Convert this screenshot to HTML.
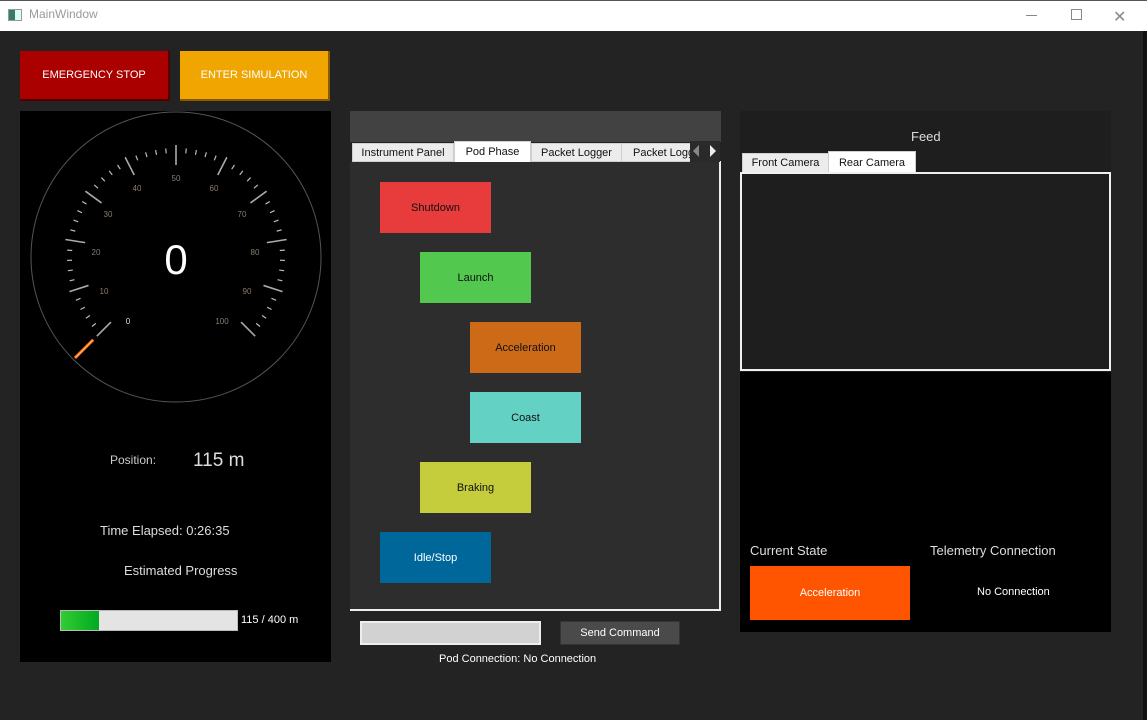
<!DOCTYPE html>
<html><head><meta charset="utf-8"><style>
*{margin:0;padding:0;box-sizing:border-box}
body{width:1147px;height:720px;background:#232323;font-family:"Segoe UI","Liberation Sans",sans-serif;position:relative;overflow:hidden}
.a{position:absolute}
.c{display:flex;align-items:center;justify-content:center}
.tab{position:absolute;background:#ececec;border:1px solid #cfcfcf;color:#111;font-size:11px;display:flex;align-items:center;justify-content:center;white-space:nowrap;overflow:hidden}
.ph{position:absolute;width:111px;height:51px;font-size:11px;color:#111;display:flex;align-items:center;justify-content:center}
</style></head><body>
<div class="a" style="left:0;top:0;width:1147px;height:31px;background:#fff"></div>
<div class="a" style="left:0;top:0;width:1147px;height:1px;background:#555"></div>
<div class="a" style="left:8px;top:9px;width:14px;height:12px;border:1px solid #999;background:linear-gradient(90deg,#3a7a6a 50%,#dfe 50%)"></div>
<div class="a" style="left:29px;top:7px;font-size:12px;color:#9a9a9a">MainWindow</div>
<div class="a" style="left:1026px;top:15px;width:11px;height:1px;background:#888"></div>
<div class="a" style="left:1071px;top:9px;width:11px;height:11px;border:1px solid #888"></div>
<div class="a" style="left:1113px;top:7px;font-size:16px;color:#888">✕</div>
<div class="a" style="left:1143px;top:31px;width:4px;height:689px;background:#111"></div>

<div class="a c" style="left:20px;top:51px;width:150px;height:50px;background:#ab0000;border-right:2px solid #500;border-bottom:2px solid #500;color:#fff;font-size:11px">EMERGENCY STOP</div>
<div class="a c" style="left:180px;top:51px;width:150px;height:50px;background:#f0a500;border-right:2px solid #8a5a00;border-bottom:2px solid #8a5a00;color:#fff;font-size:11px">ENTER SIMULATION</div>

<div class="a" style="left:20px;top:111px;width:311px;height:551px;background:#000"></div>
<svg class="a" style="left:0;top:0" width="340" height="420">
<defs>
<line id="mn" x1="0" y1="-104" x2="0" y2="-109" stroke="#bbb" stroke-width="1.2"/>
<line id="mj" x1="0" y1="-92" x2="0" y2="-112" stroke="#aaa" stroke-width="1.6"/>
</defs>
<circle cx="176" cy="257" r="145" fill="none" stroke="#555" stroke-width="1"/>
<g transform="translate(176,257)">
<use href="#mj" transform="rotate(-135)"/><use href="#mj" transform="rotate(-108)"/><use href="#mj" transform="rotate(-81)"/><use href="#mj" transform="rotate(-54)"/><use href="#mj" transform="rotate(-27)"/><use href="#mj" transform="rotate(0)"/><use href="#mj" transform="rotate(27)"/><use href="#mj" transform="rotate(54)"/><use href="#mj" transform="rotate(81)"/><use href="#mj" transform="rotate(108)"/><use href="#mj" transform="rotate(135)"/>
<use href="#mn" transform="rotate(-129.6)"/><use href="#mn" transform="rotate(-124.2)"/><use href="#mn" transform="rotate(-118.8)"/><use href="#mn" transform="rotate(-113.4)"/><use href="#mn" transform="rotate(-102.6)"/><use href="#mn" transform="rotate(-97.2)"/><use href="#mn" transform="rotate(-91.8)"/><use href="#mn" transform="rotate(-86.4)"/><use href="#mn" transform="rotate(-75.6)"/><use href="#mn" transform="rotate(-70.2)"/><use href="#mn" transform="rotate(-64.8)"/><use href="#mn" transform="rotate(-59.4)"/><use href="#mn" transform="rotate(-48.6)"/><use href="#mn" transform="rotate(-43.2)"/><use href="#mn" transform="rotate(-37.8)"/><use href="#mn" transform="rotate(-32.4)"/><use href="#mn" transform="rotate(-21.6)"/><use href="#mn" transform="rotate(-16.2)"/><use href="#mn" transform="rotate(-10.8)"/><use href="#mn" transform="rotate(-5.4)"/>
<use href="#mn" transform="rotate(129.6)"/><use href="#mn" transform="rotate(124.2)"/><use href="#mn" transform="rotate(118.8)"/><use href="#mn" transform="rotate(113.4)"/><use href="#mn" transform="rotate(102.6)"/><use href="#mn" transform="rotate(97.2)"/><use href="#mn" transform="rotate(91.8)"/><use href="#mn" transform="rotate(86.4)"/><use href="#mn" transform="rotate(75.6)"/><use href="#mn" transform="rotate(70.2)"/><use href="#mn" transform="rotate(64.8)"/><use href="#mn" transform="rotate(59.4)"/><use href="#mn" transform="rotate(48.6)"/><use href="#mn" transform="rotate(43.2)"/><use href="#mn" transform="rotate(37.8)"/><use href="#mn" transform="rotate(32.4)"/><use href="#mn" transform="rotate(21.6)"/><use href="#mn" transform="rotate(16.2)"/><use href="#mn" transform="rotate(10.8)"/><use href="#mn" transform="rotate(5.4)"/>
<line x1="0" y1="-117" x2="0" y2="-143" stroke="#ff6a00" stroke-width="3" transform="rotate(-135)"/>
<line x1="0" y1="-118" x2="0" y2="-142" stroke="#ffd0a0" stroke-width="0.8" transform="rotate(-135)"/>
</g>
<g font-family="Liberation Sans,sans-serif" font-size="8" fill="#8a7c6c" text-anchor="middle">
<text x="128" y="324" fill="#ddd">0</text><text x="104" y="294">10</text><text x="96" y="255">20</text><text x="108" y="217">30</text><text x="137" y="191">40</text><text x="176" y="181">50</text><text x="214" y="191">60</text><text x="242" y="217">70</text><text x="255" y="255">80</text><text x="247" y="294">90</text><text x="222" y="324">100</text>
</g>
<text x="176" y="274" font-family="Liberation Sans,sans-serif" font-size="42" fill="#fff" text-anchor="middle">0</text>
</svg>
<div class="a" style="left:110px;top:453px;font-size:12px;color:#ccc">Position:</div>
<div class="a" style="left:193px;top:450px;font-size:19px;color:#ddd">115 m</div>
<div class="a" style="left:100px;top:523px;font-size:13px;color:#ddd">Time Elapsed: 0:26:35</div>
<div class="a" style="left:124px;top:563px;font-size:13px;color:#ddd">Estimated Progress</div>
<div class="a" style="left:60px;top:610px;width:178px;height:21px;background:#e4e4e4;border:1px solid #bbb"></div>
<div class="a" style="left:61px;top:611px;width:38px;height:19px;background:linear-gradient(90deg,#3c3,#0a2)"></div>
<div class="a" style="left:241px;top:614px;font-size:11px;color:#fff">115 / 400 m</div>

<div class="a" style="left:350px;top:111px;width:371px;height:31px;background:#424242"></div>
<div class="a" style="left:350px;top:161px;width:371px;height:450px;background:#2d2d2d;border-right:2px solid #eee;border-bottom:2px solid #eee"></div>
<div class="tab" style="left:352px;top:143px;width:102px;height:19px">Instrument Panel</div>
<div class="tab" style="left:454px;top:141px;width:77px;height:21px;background:#fff;border-bottom:none">Pod Phase</div>
<div class="tab" style="left:531px;top:143px;width:91px;height:19px">Packet Logger</div>
<div class="tab" style="left:621px;top:143px;width:70px;height:19px;justify-content:flex-start;padding-left:11px">Packet Logger</div>
<div class="a" style="left:690px;top:141px;width:30px;height:21px;background:#2a2a2a"></div>
<div class="a" style="left:693px;top:145px;width:0;height:0;border-top:6px solid transparent;border-bottom:6px solid transparent;border-right:6px solid #888"></div>
<div class="a" style="left:710px;top:145px;width:0;height:0;border-top:6px solid transparent;border-bottom:6px solid transparent;border-left:6px solid #eee"></div>
<div class="ph" style="left:380px;top:182px;background:#e83b3b">Shutdown</div>
<div class="ph" style="left:420px;top:252px;background:#52c84e">Launch</div>
<div class="ph" style="left:470px;top:322px;background:#cc6a18">Acceleration</div>
<div class="ph" style="left:470px;top:392px;background:#63d1c3">Coast</div>
<div class="ph" style="left:420px;top:462px;background:#c5cd3c">Braking</div>
<div class="ph" style="left:380px;top:532px;background:#00679b;color:#fff">Idle/Stop</div>
<div class="a" style="left:360px;top:621px;width:181px;height:24px;background:#d2d2d2;border:2px solid #eee"></div>
<div class="a c" style="left:560px;top:621px;width:120px;height:24px;background:#4a4a4a;border:1px solid #333;color:#fff;font-size:11px">Send Command</div>
<div class="a" style="left:439px;top:653px;font-size:11px;color:#fff">Pod Connection: No Connection</div>

<div class="a" style="left:740px;top:111px;width:371px;height:521px;background:#000"></div>
<div class="a" style="left:740px;top:111px;width:371px;height:261px;background:#1e1e1e"></div>
<div class="a" style="left:911px;top:129px;font-size:13px;color:#ddd">Feed</div>
<div class="tab" style="left:742px;top:153px;width:87px;height:20px">Front Camera</div>
<div class="tab" style="left:828px;top:151px;width:88px;height:22px;background:#fff;border-bottom:none">Rear Camera</div>
<div class="a" style="left:740px;top:172px;width:371px;height:199px;border:2px solid #f0f0f0;background:#1e1e1e"></div>
<div class="a" style="left:750px;top:543px;font-size:13px;color:#ddd">Current State</div>
<div class="a" style="left:930px;top:543px;font-size:13px;color:#ddd">Telemetry Connection</div>
<div class="a c" style="left:750px;top:566px;width:160px;height:54px;background:#ff5500;color:#fff;font-size:11px">Acceleration</div>
<div class="a" style="left:977px;top:586px;font-size:11px;color:#fff">No Connection</div>
</body></html>
